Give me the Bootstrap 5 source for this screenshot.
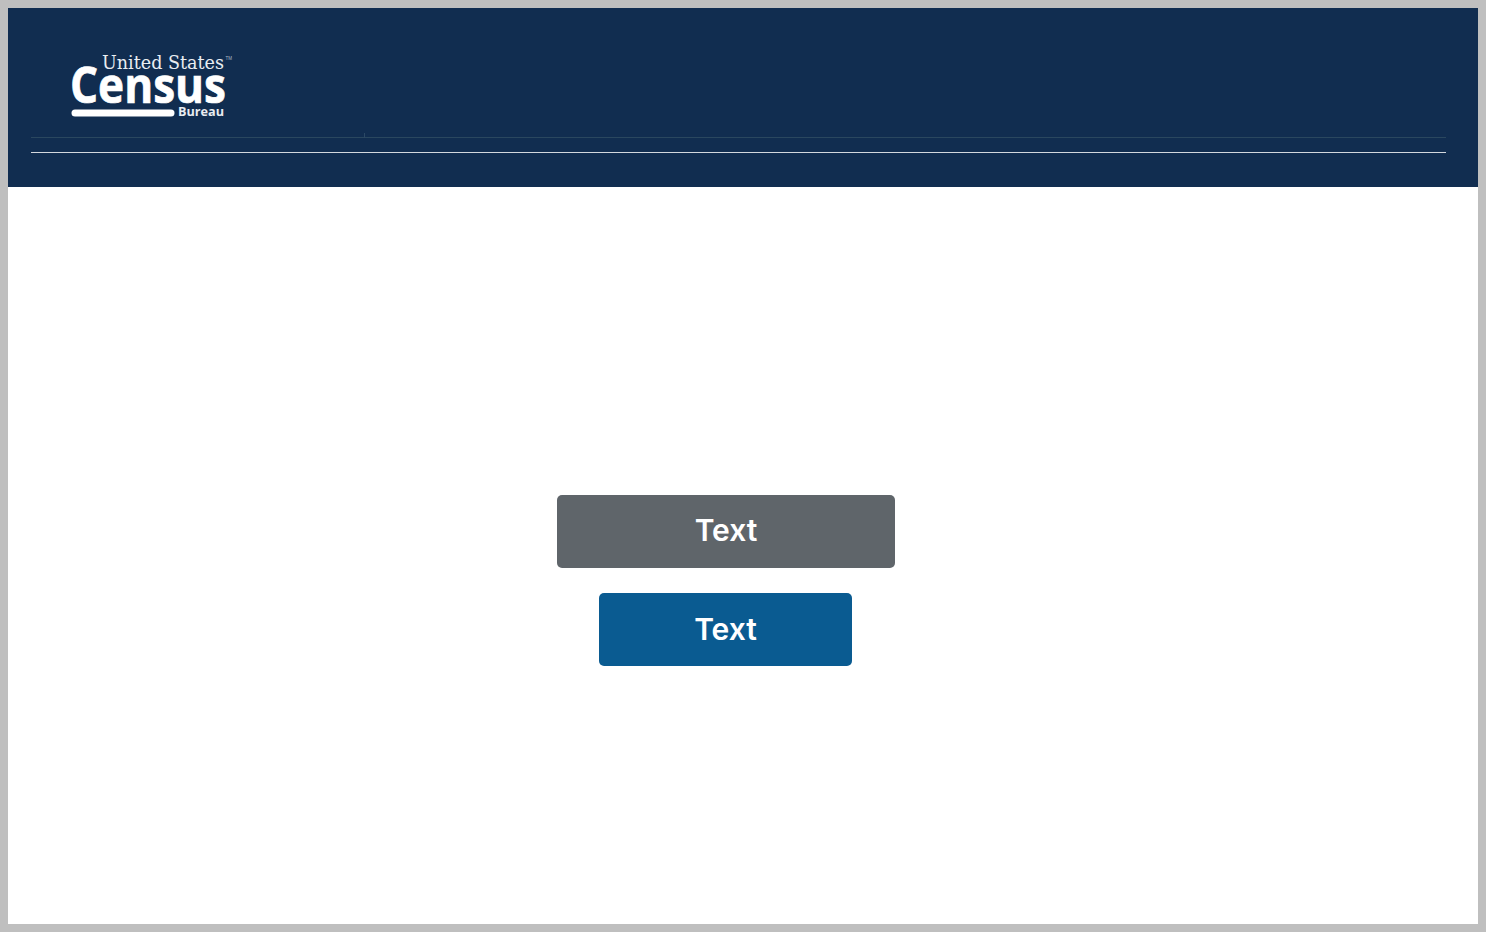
<!DOCTYPE html>
<html lang="en">
<head>
    <meta charset="UTF-8">
    <meta name="viewport" content="width=device-width, initial-scale=1.0">
    <title>United States Census Bureau</title>
    <link rel="stylesheet" href="https://cdn.jsdelivr.net/npm/bootstrap@5.3.0/dist/css/bootstrap.min.css">
    <style>
        html, body { height: 100%; }
        body { background: #bfbfbf; padding: 8px; overflow: hidden; }
        .page-frame { height: 916px; background: #fff; }
        .site-header { height: 179px; background: #112d50; padding: 42px 32px 0 23px; }
        .census-logo { display: block; width: 170px; height: 70px; margin-left: 39px; overflow: visible; }
        .logo-top { font: 400 18.5px "DejaVu Serif", "Liberation Serif", serif; fill: #e9edf2; }
        .logo-tm { font: 400 4.5px "Liberation Sans", sans-serif; fill: #aeb9c6; }
        .logo-main { font: 700 51px "Open Sans", "Liberation Sans", sans-serif; fill: #fff; stroke: #fff; stroke-width: .7px; }
        .logo-sub { font: 700 13px "Open Sans", "Liberation Sans", sans-serif; fill: #e8ecf1; }
        .rule-faint { height: 1px; margin-top: 17px; background: #2a475f; position: relative; }
        .rule-tick { position: absolute; left: 333px; top: -4px; width: 1px; height: 5px; background: #2b4865; }
        .rule-white { height: 1px; margin-top: 14px; background: #d3d8de; }
        .main-area { padding: 308px 34px 0 0; gap: 25px; }
        .action-btn { height: 73px; padding-top: 0; padding-bottom: 3px; font: 600 30px/1.2 "Inter", "Open Sans", sans-serif; color: #fff; border: 0; border-radius: 5px; }
        .action-btn:hover, .action-btn:focus { color: #fff; }
        .btn-wide { width: 338px; background: #5f656a; }
        .btn-wide:hover, .btn-wide:focus { background: #5f656a; }
        .btn-narrow { width: 253px; margin-right: 1px; padding-bottom: 2px; background: #0a5b91; }
        .btn-narrow:hover, .btn-narrow:focus { background: #0a5b91; }
    </style>
</head>
<body>
    <div class="page-frame d-flex flex-column">
        <header class="site-header">
            <svg class="census-logo" viewBox="0 0 170 70" role="img" aria-label="United States Census Bureau">
                <text class="logo-top" x="32" y="19" textLength="122" lengthAdjust="spacingAndGlyphs">United States</text>
                <text class="logo-tm" x="155.5" y="10">TM</text>
                <text class="logo-main" x="0" y="52.5" textLength="156" lengthAdjust="spacingAndGlyphs">Census</text>
                <rect x="1.5" y="59.5" width="103" height="7" rx="3.5" fill="#fff"/>
                <text class="logo-sub" x="108" y="66" textLength="46" lengthAdjust="spacingAndGlyphs">Bureau</text>
            </svg>
            <div class="rule-faint"><span class="rule-tick"></span></div>
            <div class="rule-white"></div>
        </header>
        <main class="main-area d-flex flex-column align-items-center flex-grow-1">
            <button type="button" class="btn action-btn btn-wide">Text</button>
            <button type="button" class="btn action-btn btn-narrow">Text</button>
        </main>
    </div>
    <script src="https://cdn.jsdelivr.net/npm/bootstrap@5.3.0/dist/js/bootstrap.bundle.min.js"></script>
</body>
</html>
